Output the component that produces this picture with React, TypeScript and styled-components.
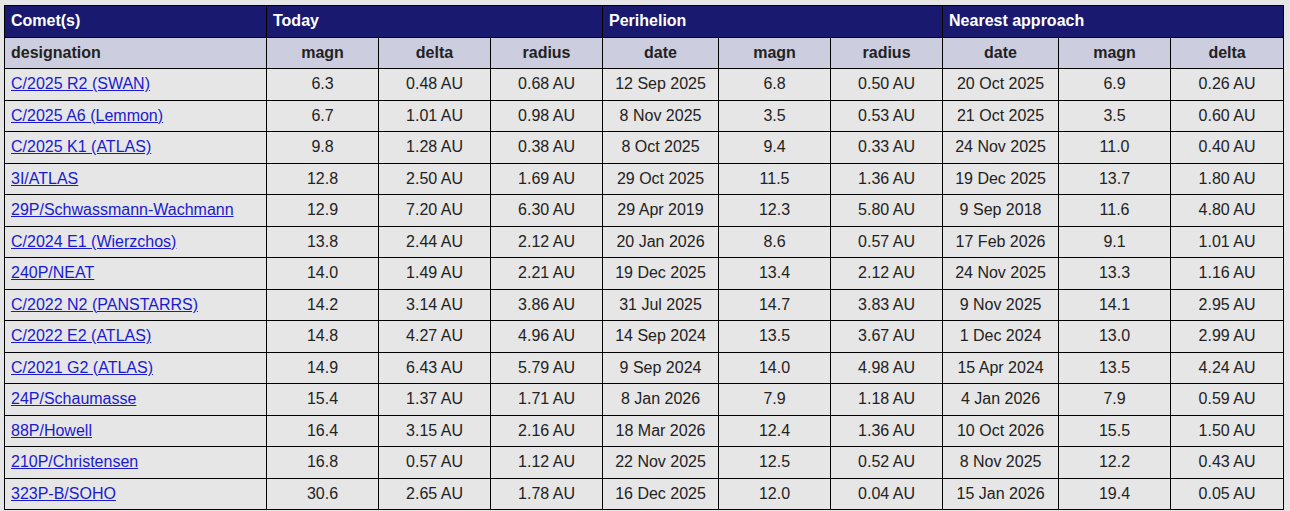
import React from "react";
import styled, { createGlobalStyle } from "styled-components";

const GlobalStyle = createGlobalStyle`
  body {
    margin: 0;
    background: #e6e6e6;
    font-family: "Liberation Sans", Arial, sans-serif;
  }
`;

type Comet = {
  name: string;
  today: [string, string, string];
  peri: [string, string, string];
  near: [string, string, string];
};

const comets: Comet[] = [
  { name: "C/2025 R2 (SWAN)", today: ["6.3", "0.48 AU", "0.68 AU"], peri: ["12 Sep 2025", "6.8", "0.50 AU"], near: ["20 Oct 2025", "6.9", "0.26 AU"] },
  { name: "C/2025 A6 (Lemmon)", today: ["6.7", "1.01 AU", "0.98 AU"], peri: ["8 Nov 2025", "3.5", "0.53 AU"], near: ["21 Oct 2025", "3.5", "0.60 AU"] },
  { name: "C/2025 K1 (ATLAS)", today: ["9.8", "1.28 AU", "0.38 AU"], peri: ["8 Oct 2025", "9.4", "0.33 AU"], near: ["24 Nov 2025", "11.0", "0.40 AU"] },
  { name: "3I/ATLAS", today: ["12.8", "2.50 AU", "1.69 AU"], peri: ["29 Oct 2025", "11.5", "1.36 AU"], near: ["19 Dec 2025", "13.7", "1.80 AU"] },
  { name: "29P/Schwassmann-Wachmann", today: ["12.9", "7.20 AU", "6.30 AU"], peri: ["29 Apr 2019", "12.3", "5.80 AU"], near: ["9 Sep 2018", "11.6", "4.80 AU"] },
  { name: "C/2024 E1 (Wierzchos)", today: ["13.8", "2.44 AU", "2.12 AU"], peri: ["20 Jan 2026", "8.6", "0.57 AU"], near: ["17 Feb 2026", "9.1", "1.01 AU"] },
  { name: "240P/NEAT", today: ["14.0", "1.49 AU", "2.21 AU"], peri: ["19 Dec 2025", "13.4", "2.12 AU"], near: ["24 Nov 2025", "13.3", "1.16 AU"] },
  { name: "C/2022 N2 (PANSTARRS)", today: ["14.2", "3.14 AU", "3.86 AU"], peri: ["31 Jul 2025", "14.7", "3.83 AU"], near: ["9 Nov 2025", "14.1", "2.95 AU"] },
  { name: "C/2022 E2 (ATLAS)", today: ["14.8", "4.27 AU", "4.96 AU"], peri: ["14 Sep 2024", "13.5", "3.67 AU"], near: ["1 Dec 2024", "13.0", "2.99 AU"] },
  { name: "C/2021 G2 (ATLAS)", today: ["14.9", "6.43 AU", "5.79 AU"], peri: ["9 Sep 2024", "14.0", "4.98 AU"], near: ["15 Apr 2024", "13.5", "4.24 AU"] },
  { name: "24P/Schaumasse", today: ["15.4", "1.37 AU", "1.71 AU"], peri: ["8 Jan 2026", "7.9", "1.18 AU"], near: ["4 Jan 2026", "7.9", "0.59 AU"] },
  { name: "88P/Howell", today: ["16.4", "3.15 AU", "2.16 AU"], peri: ["18 Mar 2026", "12.4", "1.36 AU"], near: ["10 Oct 2026", "15.5", "1.50 AU"] },
  { name: "210P/Christensen", today: ["16.8", "0.57 AU", "1.12 AU"], peri: ["22 Nov 2025", "12.5", "0.52 AU"], near: ["8 Nov 2025", "12.2", "0.43 AU"] },
  { name: "323P-B/SOHO", today: ["30.6", "2.65 AU", "1.78 AU"], peri: ["16 Dec 2025", "12.0", "0.04 AU"], near: ["15 Jan 2026", "19.4", "0.05 AU"] },
];

const widths = [262, 112, 112, 112, 116, 112, 112, 116, 112, 113];
const subHeads = ["magn", "delta", "radius", "date", "magn", "radius", "date", "magn", "delta"];

export default function App() {
  return (
    <>
      <GlobalStyle />
      <Page>
        <Table>
          <colgroup>
            {widths.map((w, i) => (
              <col key={i} style={{ width: w }} />
            ))}
          </colgroup>
          <thead>
            <tr>
              <GroupHead>Comet(s)</GroupHead>
              <GroupHead colSpan={3}>Today</GroupHead>
              <GroupHead colSpan={3}>Perihelion</GroupHead>
              <GroupHead colSpan={3}>Nearest approach</GroupHead>
            </tr>
            <tr>
              <SubHead $left>designation</SubHead>
              {subHeads.map((h, i) => (
                <SubHead key={i}>{h}</SubHead>
              ))}
            </tr>
          </thead>
          <tbody>
            {comets.map((c) => (
              <tr key={c.name}>
                <NameCell>
                  <CometLink href="#">{c.name}</CometLink>
                </NameCell>
                {[...c.today, ...c.peri, ...c.near].map((v, i) => (
                  <Cell key={i}>{v}</Cell>
                ))}
              </tr>
            ))}
          </tbody>
        </Table>
      </Page>
    </>
  );
}

const Page = styled.div`
  padding: 5px 0 0 4px;
`;

const Table = styled.table`
  border-collapse: collapse;
  table-layout: fixed;
  width: 1279px;
  font-size: 16px;
  line-height: 18.5px;
  color: #222;
  background: #e6e6e6;

  td,
  th {
    border: 1px solid #000;
    padding: 6px 6px;
    white-space: nowrap;
    overflow: hidden;
  }
`;

const GroupHead = styled.th`
  background: #191970;
  color: #fff;
  font-weight: bold;
  text-align: left;
`;

const SubHead = styled.th<{ $left?: boolean }>`
  background: #cdcde0;
  color: #222;
  font-weight: bold;
  text-align: ${(p) => (p.$left ? "left" : "center")};
`;

const NameCell = styled.td`
  text-align: left;
`;

const Cell = styled.td`
  text-align: center;
`;

const CometLink = styled.a`
  color: #1a1ad0;
  text-decoration: underline;
`;
